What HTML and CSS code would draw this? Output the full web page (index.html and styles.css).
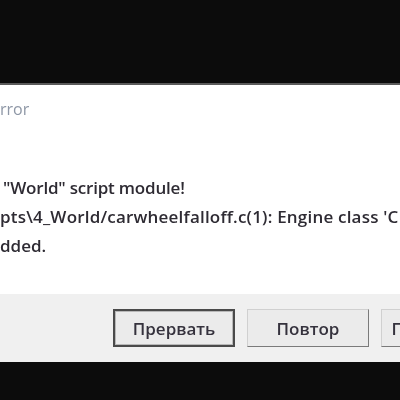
FILE: index.html
```html
<!DOCTYPE html>
<html>
<head>
<meta charset="utf-8">
<link rel="stylesheet" href="styles.css">
</head>
<body>
<div class="screen">
  <div class="backdrop"></div>
  <div class="dialog">
    <div class="title">rror</div>
    <div class="content">
      <p class="line first">"World" script module!</p>
      <p class="line second">pts\4_World/carwheelfalloff.c(1): Engine class 'C</p>
      <p class="line">dded.</p>
    </div>
    <div class="footer">
      <button class="btn default">Прервать</button>
      <button class="btn">Повтор</button>
      <button class="btn">Пропустить</button>
    </div>
  </div>
</div>
</body>
</html>
```
FILE: styles.css
```css
html, body {
  margin: 0;
  padding: 0;
}
body {
  background: #0c0c0c;
  width: 400px;
  height: 400px;
  overflow: hidden;
  font-family: "Open Sans", "Noto Sans", sans-serif;
}
.screen {
  width: 400px;
  height: 400px;
  overflow: hidden;
  filter: blur(0.6px);
}
.backdrop {
  height: 83px;
}
.dialog {
  background: #ffffff;
  border-top: 2px solid #5a5a5a;
  overflow: hidden;
}
.title {
  height: 40px;
  padding-top: 13px;
  box-sizing: border-box;
  font-size: 16px;
  line-height: 22px;
  color: #8e97a6;
}
.content {
  height: 169px;
  box-sizing: border-box;
  padding-top: 48px;
  color: #2e2b33;
  font-size: 17px;
  line-height: 29px;
  font-weight: 600;
}
.line {
  margin: 0;
  white-space: nowrap;
  overflow: hidden;
}
.line.first {
  padding-left: 3px;
  letter-spacing: -0.2px;
}
.line.second {
  letter-spacing: 0.2px;
}
.footer {
  background: #f0f0f0;
  height: 68px;
  box-sizing: border-box;
  padding: 15px 0 0 113px;
  display: flex;
  gap: 12px;
  white-space: nowrap;
}
.btn {
  flex: none;
  width: 122px;
  height: 38px;
  font-family: inherit;
  font-size: 17px;
  font-weight: 600;
  color: #35323d;
  background: #ebebeb;
  border: 1px solid;
  border-color: #d0d0d0 #7a7a7a #7a7a7a #d0d0d0;
  padding: 0;
}
.btn.default {
  border: 2px solid #4a4a4a;
  box-shadow: inset 0 0 0 1px #b8b8b8;
}
```
